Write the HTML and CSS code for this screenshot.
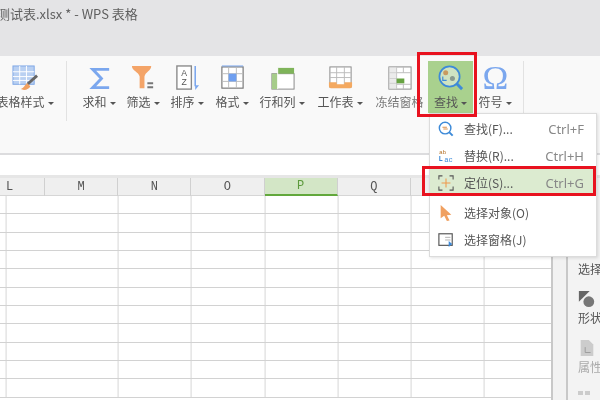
FILE: index.html
```html
<!DOCTYPE html>
<html lang="zh">
<head>
<meta charset="utf-8">
<title>WPS 表格</title>
<link rel="stylesheet" href="styles.css">
</head>
<body>
<div class="app">
  <header class="titlebar"><span class="title">测试表.xlsx * - WPS 表格</span></header>
  <section class="ribbon">
    <div class="tool t1">
      <svg class="ico" viewBox="0 0 28 28"><rect x="1" y="1" width="22" height="19" fill="#b9d0f2" stroke="#7ea6e6"/><path d="M1 7h22M1 12h22M1 16h22M8 1v19M15 1v19" stroke="#fff" fill="none"/><path d="M26 11 16 20" stroke="#666" stroke-width="3"/><path d="M16 19c-3 1-3 5-7 6 4 2 9 0 10-3z" fill="#f0a060"/></svg>
      <span class="lbl">表格样式<i class="car"></i></span>
    </div>
    <div class="sep"></div>
    <div class="tool">
      <svg class="ico" viewBox="0 0 28 28"><path d="M24 4.5H7l9 9.500-9 9.500h17" fill="none" stroke="#7ba7ee" stroke-width="3"/></svg>
      <span class="lbl">求和<i class="car"></i></span>
    </div>
    <div class="tool">
      <svg class="ico" viewBox="0 0 28 28"><path d="M2 1h20c0 5-6 6-7 11v12h-5V12C9 7 2 6 2 1z" fill="#f4a468"/><path d="M18 19h6M18 23h6" stroke="#777" stroke-width="2"/></svg>
      <span class="lbl">筛选<i class="car"></i></span>
    </div>
    <div class="tool">
      <svg class="ico" viewBox="0 0 28 28"><rect x="3" y="1" width="15" height="24" fill="#fff" stroke="#888" stroke-width="1.4"/><text x="10.5" y="11" class="az">A</text><text x="10.5" y="21" class="az">Z</text><path d="M22 1v21" stroke="#7ba7ee" stroke-width="1.6"/><path d="M22 26l4-5h-4z" fill="#7ba7ee"/></svg>
      <span class="lbl">排序<i class="car"></i></span>
    </div>
    <div class="tool">
      <svg class="ico" viewBox="0 0 28 28"><rect x="3" y="2" width="22" height="22" fill="#fff" stroke="#777" stroke-width="1.2"/><path d="M3 9h22M3 17h22M10 2v22M18 2v22" stroke="#bbb" fill="none"/><rect x="10" y="9" width="8" height="8" fill="#6f9ff0"/><path d="M3 1h22" stroke="#7ba7ee"/></svg>
      <span class="lbl">格式<i class="car"></i></span>
    </div>
    <div class="tool">
      <svg class="ico" viewBox="0 0 28 28"><rect x="3" y="9" width="23" height="16" fill="#fff" stroke="#888"/><path d="M9 3h17v6H9z" fill="#7fb45a"/><path d="M3 9h6v16H3z" fill="#a6cc8a"/><path d="M9 3v22" stroke="#fff"/></svg>
      <span class="lbl">行和列<i class="car"></i></span>
    </div>
    <div class="tool">
      <svg class="ico" viewBox="0 0 28 28"><rect x="3" y="2" width="22" height="21" fill="#fff" stroke="#888"/><path d="M3 8h22M3 13h22M10 2v21M18 2v21" stroke="#bbb" fill="none"/><path d="M2 18h8v2h8v-2h8v4c0 1-1 2-2 2H4c-1 0-2-1-2-2z" fill="#f4a960"/></svg>
      <span class="lbl">工作表<i class="car"></i></span>
    </div>
    <div class="tool">
      <svg class="ico" viewBox="0 0 28 28"><rect x="3" y="2" width="23" height="23" fill="#fff" stroke="#888"/><path d="M3 8h23M3 14h8M3 19h8M11 2v23M18 2v6M18 20v5M11 20h15" stroke="#bbb" fill="none"/><path d="M3 2h8v23H3z" fill="#ddd" opacity=".6"/><rect x="11" y="14" width="8" height="5" fill="#67a342"/></svg>
      <span class="lbl muted">冻结窗格</span>
    </div>
    <div class="tool on">
      <svg class="ico" viewBox="0 0 28 28"><circle cx="13" cy="12" r="10.5" fill="#cfe3c2" stroke="#3d8ad8" stroke-width="1.8"/><path d="M20 19l6 6" stroke="#3d8ad8" stroke-width="3"/><circle cx="9" cy="8" r="2.6" fill="#c99a60"/><circle cx="16" cy="14" r="2.6" fill="#8a9a8e"/><path d="M6 12v4h4" fill="none" stroke="#3d8ad8" stroke-width="1.2"/></svg>
      <span class="lbl">查找<i class="car"></i></span>
    </div>
    <div class="tool">
      <svg class="ico" viewBox="0 0 28 28"><text x="14" y="25" class="omega">Ω</text></svg>
      <span class="lbl">符号<i class="car"></i></span>
    </div>
    <div class="sep"></div>
  </section>
  <div class="formula"></div>
  <div class="workarea">
    <div class="sheet">
      <div class="colhead">
        <span class="ch cl">L</span><span class="ch">M</span><span class="ch">N</span><span class="ch">O</span><span class="ch sel">P</span><span class="ch">Q</span><span class="ch"></span><span class="ch"></span>
      </div>
      <div class="rows">
        <div class="row"></div><div class="row"></div><div class="row"></div><div class="row"></div><div class="row"></div><div class="row"></div><div class="row"></div><div class="row"></div><div class="row"></div><div class="row"></div><div class="row"></div>
      </div>
    </div>
    <div class="scroll"></div>
    <aside class="panel">
      <span class="ptxt">选择</span>
      <svg class="pico" viewBox="0 0 20 20"><path d="M1 1h12L1 13z" fill="#666"/><circle cx="12" cy="13" r="6" fill="#777"/></svg>
      <span class="ptxt">形状</span>
      <svg class="pico" viewBox="0 0 20 20"><path d="M3 1h9l5 5v13H3z" fill="#ccc"/><path d="M8 9v6h6" fill="none" stroke="#999"/></svg>
      <span class="ptxt faint">属性</span>
      <div class="dots"><i></i><i></i></div>
    </aside>
  </div>
</div>

<nav class="menu">
  <div class="mi">
    <svg class="mico" viewBox="0 0 18 18"><circle cx="8" cy="8" r="6.500" fill="none" stroke="#3d8ad8" stroke-width="1.6"/><path d="M12.500 12.500l4 4" stroke="#3d8ad8" stroke-width="2.200"/><path d="M5 7h5M11 9H6" stroke="#d9904c" stroke-width="1.300"/></svg>
    <span class="mt">查找(F)...</span><span class="ms">Ctrl+F</span>
  </div>
  <div class="mi">
    <svg class="mico" viewBox="0 0 18 18"><text x="1" y="7" class="mab">ab</text><path d="M2 9v5h3" fill="none" stroke="#3d8ad8" stroke-width="1.200"/><text x="7" y="16" class="mac">ac</text></svg>
    <span class="mt">替换(R)...</span><span class="ms">Ctrl+H</span>
  </div>
  <div class="mi hl">
    <svg class="mico" viewBox="0 0 18 18"><path d="M1 5V1h4M13 1h4v4M17 13v4h-4M5 17H1v-4" fill="none" stroke="#555" stroke-width="1.200"/><path d="M9 4v10M4 9h10" stroke="#ee9a4d" stroke-width="1.200"/></svg>
    <span class="mt">定位(S)...</span><span class="ms">Ctrl+G</span>
  </div>
  <div class="mi gap">
    <svg class="mico" viewBox="0 0 18 18"><path d="M3 0l12 11-5 .5 3 6-3 .5-3-6-4 3z" fill="#f0a060"/></svg>
    <span class="mt">选择对象(O)</span>
  </div>
  <div class="mi">
    <svg class="mico" viewBox="0 0 18 18"><rect x="1" y="2" width="15" height="13" fill="#fff" stroke="#555" stroke-width="1.300"/><path d="M8 6h6M8 9h6" stroke="#aaa"/><path d="M12 10v7l4-3.500z" fill="#3d8ad8"/></svg>
    <span class="mt">选择窗格(J)</span>
  </div>
</nav>
<div class="mark mark-find"></div>
<div class="mark mark-goto"></div>
</body>
</html>
```
FILE: styles.css
```css
* { box-sizing: border-box; }
html, body { margin: 0; width: 600px; height: 400px; overflow: hidden; background: #fff; }
body { position: relative; font-family: "Noto Sans CJK SC", "Noto Sans", sans-serif; color: #555; filter: blur(.45px); }
.app { display: flex; flex-direction: column; width: 600px; height: 400px; }

.titlebar { height: 56px; background: #e4e4e6; padding: 5px 0 0; flex: none; }
.title { display: block; margin-left: -3px; font-size: 13px; line-height: 18px; color: #5f5f5f; white-space: nowrap; }

.ribbon { height: 99px; flex: none; background: #f9f9f9; border-bottom: 2px solid #dcdcde; display: grid;
  grid-template-columns: 60px 22px 44px 44px 44px 46px 54px 62px 57px 45px 44px 12px; margin-left: -5px; width: 605px; padding-top: 5px; align-items: start; }
.tool { display: flex; flex-direction: column; align-items: center; height: 52px; padding-top: 4px; white-space: nowrap; }
.ico { width: 27px; height: 27px; flex: none; }
.lbl { margin-top: 2px; font-size: 12px; line-height: 16px; white-space: nowrap; color: #555; }
.lbl.muted { color: #777; }
.car { display: inline-block; margin-left: 3px; border: 3px solid transparent; border-top: 3px solid #555; border-bottom: 0; vertical-align: middle; }
.on { background: #a9d18e; }
.sep { width: 1px; height: 60px; background: #e2e2e2; justify-self: center; }
.az { font: 9px "Liberation Sans", sans-serif; fill: #555; text-anchor: middle; }
.omega { font: 36px "Liberation Serif", serif; fill: #7ba7ee; text-anchor: middle; }

.formula { height: 23px; flex: none; background: #fff; border-bottom: 3px solid #e6e6e6; }

.workarea { flex: 1; display: flex; min-height: 0; }
.sheet { width: 551px; flex: none; overflow: hidden; }
.colhead { display: grid; grid-template-columns: 45px repeat(7, 73.2px); height: 18px; background: #efefef; border-bottom: 1px solid #d6d6d6; }
.ch { display: flex; align-items: center; justify-content: center; font: 12px/17px "Liberation Mono", monospace; color: #555; border-right: 1px solid #d0d0d0; }
.cl { justify-content: flex-start; padding-left: 6px; }
.sel { background: #d3e6c6; color: #5d9a3d; border-bottom: 2px solid #62a83c; height: 18px; }
.rows { height: 204px; }
.row { height: 18.35px; border-bottom: 1px solid #d2d2d2;
  background: repeating-linear-gradient(90deg, transparent 0, transparent 72.2px, #d6d6d6 72.2px, #d6d6d6 73.2px) 45.6px 0; }

.scroll { width: 17px; flex: none; background: #f2f2f2; border-left: 2px solid #c8c8c8; border-right: 2px solid #c8c8c8; }
.panel { flex: 1; background: #f3f3f3; padding: 83px 0 0 10px; display: flex; flex-direction: column; align-items: flex-start; overflow: hidden; }
.ptxt { font-size: 12px; line-height: 16px; width: 24px; white-space: nowrap; color: #555; }
.faint { color: #aaa; }
.pico { width: 18px; height: 18px; margin: 13px 0 2px; flex: none; }
.dots { display: flex; gap: 2px; margin-top: 16px; }
.dots i { width: 5px; height: 4px; background: #ccc; }

.menu { position: absolute; left: 429px; top: 113px; width: 168px; height: 144px; background: #fff; border: 1px solid #dcdcdc; box-shadow: 1px 1px 3px rgba(0,0,0,.12); padding-top: 1px; }
.mi { display: flex; align-items: center; height: 27px; padding: 0 8px; font-size: 12px; color: #555; }
.gap { margin-top: 3px; }
.hl { background: #dcebd0; }
.mico { width: 16px; height: 16px; flex: none; }
.mt { margin-left: 10px; flex: 1; white-space: nowrap; }
.ms { margin-right: 4px; font-family: "Noto Sans", sans-serif; font-size: 13px; color: #888; }
.mab { font: 7px "Liberation Mono", monospace; fill: #b5752e; }
.mac { font: 8px "Liberation Mono", monospace; fill: #3d8ad8; }

.mark { position: absolute; border: 3px solid #e8121f; }
.mark-find { left: 417px; top: 52px; width: 60px; height: 65px; }
.mark-goto { left: 422px; top: 166px; width: 174px; height: 30px; }
```
